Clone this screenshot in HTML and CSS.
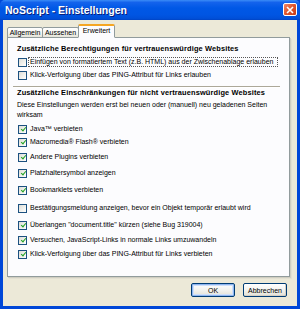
FILE: index.html
```html
<!DOCTYPE html>
<html lang="de">
<head>
<meta charset="utf-8">
<title>NoScript - Einstellungen</title>
<link rel="stylesheet" href="styles.css">
</head>
<body>
<div class="window">
  <div class="titlebar">
    <span class="title">NoScript - Einstellungen</span>
    <span class="close"><svg width="8" height="8" viewBox="0 0 8 8"><path d="M1 1L7 7M7 1L1 7" stroke="#fff" stroke-width="1.6" fill="none"/></svg></span>
  </div>
  <div class="frame">
    <div class="tabs">
      <div class="tab t1">Allgemein</div>
      <div class="tab t2">Aussehen</div>
      <div class="tab t3 active">Erweitert</div>
    </div>
    <div class="panel">
      <div class="heading h1">Zusätzliche Berechtigungen für vertrauenswürdige Websites</div>
      <div class="row g3"><span class="cb"></span><span class="label focus">Einfügen von formatiertem Text (z.B. HTML) aus der Zwischenablage erlauben</span></div>
      <div class="row g3"><span class="cb"></span><span class="label">Klick-Verfolgung über das PING-Attribut für Links erlauben</span></div>
      <div class="sep"></div>
      <div class="heading h2">Zusätzliche Einschränkungen für nicht vertrauenswürdige Websites</div>
      <div class="desc">Diese Einstellungen werden erst bei neuen oder (manuell) neu geladenen Seiten wirksam</div>
      <div class="row g4"><span class="cb on"></span><span class="label">Java™ verbieten</span></div>
      <div class="row g3"><span class="cb on"></span><span class="label">Macromedia® Flash® verbieten</span></div>
      <div class="row g5"><span class="cb on"></span><span class="label">Andere Plugins verbieten</span></div>
      <div class="row g6"><span class="cb on"></span><span class="label">Platzhaltersymbol anzeigen</span></div>
      <div class="row g7"><span class="cb on"></span><span class="label">Bookmarklets verbieten</span></div>
      <div class="row g8"><span class="cb"></span><span class="label">Bestätigungsmeldung anzeigen, bevor ein Objekt temporär erlaubt wird</span></div>
      <div class="row g7"><span class="cb on"></span><span class="label">Überlangen "document.title" kürzen (siehe Bug 319004)</span></div>
      <div class="row g5"><span class="cb on"></span><span class="label">Versuchen, JavaScript-Links in normale Links umzuwandeln</span></div>
      <div class="row g4"><span class="cb on"></span><span class="label">Klick-Verfolgung über das PING-Attribut für Links verbieten</span></div>
    </div>
    <div class="buttons">
      <button class="btn default">OK</button>
      <button class="btn">Abbrechen</button>
    </div>
  </div>
</div>
</body>
</html>
```
FILE: styles.css
```css
* { box-sizing: border-box; }
html, body { margin: 0; padding: 0; }
body {
  width: 300px;
  height: 309px;
  overflow: hidden;
  font-family: "Liberation Sans", Arial, sans-serif;
  font-size: 7px;
  color: #000;
  background: #0047d8;
}
.window {
  width: 300px;
  height: 309px;
  display: flex;
  flex-direction: column;
}
.titlebar {
  height: 20px;
  flex: none;
  display: flex;
  align-items: center;
  justify-content: space-between;
  padding: 0 3px 0 5px;
  background: linear-gradient(to bottom, #3b8cf7 0%, #1463ec 12%, #0058e6 40%, #0055e2 75%, #004fd8 92%, #0043c4 100%);
  border-radius: 5px 5px 0 0;
}
.title {
  color: #fff;
  font-weight: bold;
  font-size: 10.5px;
  text-shadow: 1px 1px 0 #0a1e7a;
}
.close {
  width: 14px;
  height: 13px;
  margin-top: -1px;
  border: 1px solid #fff;
  border-radius: 2px;
  background: linear-gradient(135deg, #f0866a 0%, #e0552c 50%, #c43c18 100%);
  display: flex;
  align-items: center;
  justify-content: center;
}
.frame {
  flex: 1;
  margin: 0 3px 3px 3px;
  background: #ece9d8;
  display: flex;
  flex-direction: column;
  padding: 0 7px 0 4px;
}
.tabs {
  height: 17px;
  flex: none;
  display: flex;
  align-items: flex-end;
  position: relative;
  z-index: 1;
}
.tab {
  height: 11px;
  margin-bottom: -1px;
  border: 1px solid #919b9c;
  border-radius: 2px 2px 0 0;
  background: linear-gradient(to bottom, #ffffff 0%, #f4f3ee 60%, #e5e3d8 100%);
  display: flex;
  align-items: center;
  justify-content: center;
  line-height: 9px;
}
.t1 { width: 36px; }
.t2 { width: 37px; margin-left: -1px; }
.t3 { width: 37px; margin-left: -1px; }
.tab.active {
  height: 14px;
  border-top: 2px solid #f5a623;
  border-bottom: 1px solid #fcfcfe;
  background: #fcfcfe;
  padding-bottom: 2px;
}
.panel {
  height: 240px;
  flex: none;
  border: 1px solid #919b9c;
  background: #fcfcfe;
  box-shadow: 1px 1px 0 #d0cec1, 2px 2px 0 #e3e0d2;
  padding: 6px 6px 0 9px;
}
.heading {
  font-weight: bold;
  font-size: 7.4px;
  letter-spacing: 0.15px;
  line-height: 10px;
  height: 10px;
  white-space: nowrap;
}
.h2 { margin-top: 1px; }
.row {
  display: flex;
  align-items: center;
  height: 10px;
  padding-left: 1px;
  white-space: nowrap;
}
.g3 { margin-top: 3px; }
.g4 { margin-top: 4px; }
.g5 { margin-top: 5px; }
.g6 { margin-top: 6px; }
.g7 { margin-top: 7px; }
.g8 { margin-top: 8px; }
.cb {
  width: 9px;
  height: 9px;
  flex: none;
  border: 1px solid #1c5180;
  background: linear-gradient(135deg, #dcdcd7 0%, #f2f2ee 60%, #ffffff 100%);
  margin-right: 3px;
  position: relative;
}
.cb.on::after {
  content: "";
  position: absolute;
  left: 1.5px;
  top: 0.5px;
  width: 2px;
  height: 4px;
  border-right: 1.6px solid #21a121;
  border-bottom: 1.6px solid #21a121;
  transform: rotate(40deg);
  transform-origin: center;
  margin-left: 1px;
}
.label { line-height: 10px; }
.focus {
  border: 1px dotted #555;
  padding: 0 4px 0 1px;
  margin-left: -2px;
  line-height: 8px;
}
.sep {
  height: 1px;
  margin: 6px 3px 0 -4px;
  background: #aca899;
  box-shadow: 0 1px 0 #fff;
}
.desc {
  margin-top: 2px;
  line-height: 10px;
  width: 262px;
}
.desc + .row { margin-top: 4px; }
.buttons {
  display: flex;
  justify-content: flex-end;
  gap: 8px;
  margin-top: 6px;
  padding-right: 3px;
}
.btn {
  width: 44px;
  height: 14px;
  font-family: "Liberation Sans", Arial, sans-serif;
  font-size: 7px;
  color: #000;
  border: 1px solid #003c74;
  border-radius: 2px;
  background: linear-gradient(to bottom, #ffffff 0%, #f3f3ef 50%, #e3e1d6 100%);
  padding: 0;
  box-shadow: inset -1px -1px 0 #d6d0c5;
}
.btn.default {
  box-shadow: inset 0 0 0 1px #8fb6f0, inset 0 0 0 2px #cfe0fa;
}
```
